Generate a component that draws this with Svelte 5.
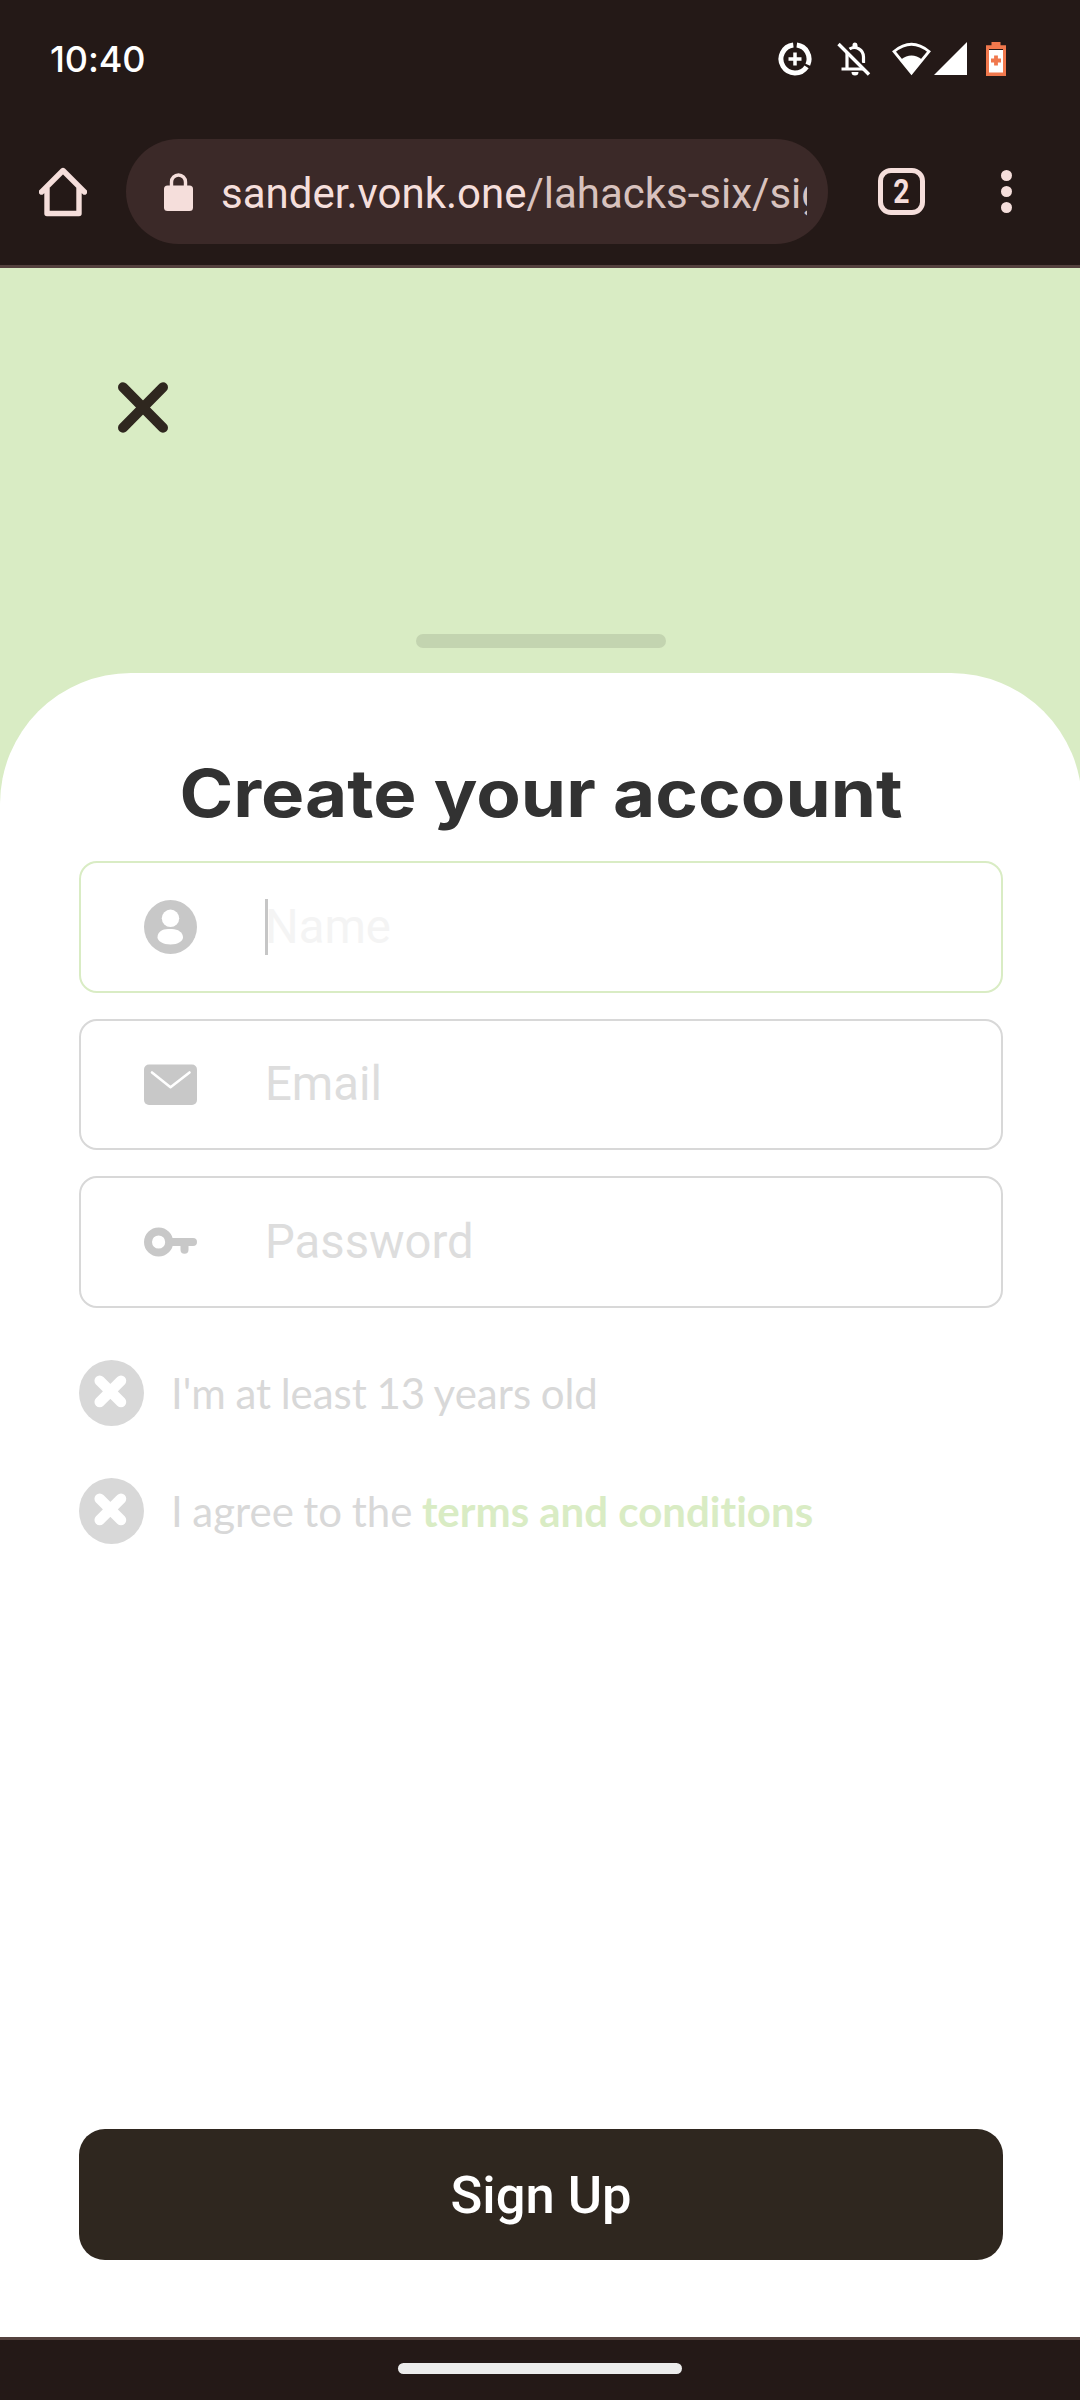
<script>
  const checks = [
    { text: "I'm at least 13 years old", link: '' },
    { text: 'I agree to the ', link: 'terms and conditions' }
  ];
</script>

<div class="screen">
  <header>
    <div class="status">
      <span class="time">10:40</span>
      <div class="sys">
        <svg class="saver" width="34" height="34" viewBox="0 0 34 34">
          <path d="M15.3 3.1A14 14 0 1 0 28.6 24.8M18.8 3.1A14 14 0 0 1 29.8 22.7" fill="none" stroke="#fff" stroke-width="5" />
          <path d="M17 10.5v13M10.5 17h13" stroke="#fff" stroke-width="3.5" />
        </svg>
        <svg class="bell" width="34" height="34" viewBox="0 0 34 34">
          <path d="M10 11V27M4.500 27H26M12.500 7C19 3 26.500 8 26.500 15v6" fill="none" stroke="#fff" stroke-width="3.200" />
          <path d="M15.500 6V3a2.500 2.500 0 0 1 5 0V6h-5zM14.500 30h7a3.500 3.500 0 0 1-7 0z" fill="#fff" />
          <path d="M4 1.500L33 31" stroke="#241917" stroke-width="3.500" />
          <path d="M1.500 2L32 32.500" stroke="#fff" stroke-width="3.400" />
        </svg>
        <svg class="wifi" width="39" height="34" viewBox="0 0 39 34">
          <path d="M2 9.500Q19.500-5 37 9.500L19.500 31z" fill="none" stroke="#fff" stroke-width="2.800" />
          <path d="M9 17.500Q19.500 9.500 30 17.500L19.500 31z" fill="#fff" />
        </svg>
        <svg class="signal" width="33" height="34" viewBox="0 0 33 34"><path d="M33 0V33H0z" fill="#fff" /></svg>
        <svg width="20" height="34" viewBox="0 0 20 34">
          <path d="M5.500 0h9v3.300H20V34H0V3.300h5.500z" fill="#f0784d" />
          <path d="M3 7h14v1H3z" fill="#241917" />
          <path d="M3 8h14v22.500H3z" fill="#fff" />
          <path d="M10 13.500v10M5 18.500h10" stroke="#f0784d" stroke-width="3.800" />
        </svg>
      </div>
    </div>
    <div class="toolbar">
      <svg class="home" width="48" height="50" viewBox="0 0 48 50">
        <path d="M2.500 25L24 3.500 45.500 25M8 21V46.500H40V21" fill="none" stroke="#f5dedb" stroke-width="5.400" stroke-linejoin="round" stroke-linecap="round" />
      </svg>
      <div class="pill">
        <svg width="29" height="38" viewBox="0 0 29 38">
          <rect y="12.500" width="29" height="25.500" rx="3.500" fill="#f5dedb" />
          <path d="M7.500 14V9a7 7 0 0 1 14 0v5" fill="none" stroke="#f5dedb" stroke-width="3.400" />
        </svg>
        <div class="url">sander.vonk.one<span>/lahacks-six/signup</span></div>
      </div>
      <div class="tabs"><span>2</span></div>
      <div class="dots"><i></i><i></i><i></i></div>
    </div>
  </header>

  <main>
    <div class="hero">
      <svg class="close" width="50" height="51" viewBox="0 0 50 51">
        <path d="M5 5.200L45 45.800M45 5.200L5 45.800" stroke="#2f271f" stroke-width="10" stroke-linecap="round" />
      </svg>
      <div class="handle"></div>
    </div>
    <section>
      <h1>Create your account</h1>
      <div class="fields">
        <div class="field active">
          <svg width="53" height="54" viewBox="0 0 53 54">
            <ellipse cx="26.500" cy="27" rx="26.500" ry="27" fill="#c8c8c8" />
            <circle cx="26.500" cy="18.300" r="8.700" fill="#fff" />
            <path d="M13.500 37.500C13.500 32 18 29 24 29h4c6 0 11 3.500 11 8.500 0 3.500-5 7-12.500 7s-13-3.500-13-7z" fill="#fff" />
          </svg>
          <b class="caret"></b>
          <span class="name">Name</span>
        </div>
        <div class="field">
          <svg width="53" height="54" viewBox="0 0 53 54">
            <rect y="6.500" width="53" height="40.500" rx="5" fill="#c8c8c8" />
            <path d="M8 14.500L26.500 29.200 45.500 14.500" fill="none" stroke="#fff" stroke-width="2.600" stroke-linecap="round" stroke-linejoin="round" />
          </svg>
          <span>Email</span>
        </div>
        <div class="field">
          <svg width="53" height="54" viewBox="0 0 53 54">
            <circle cx="14.600" cy="27" r="10.600" fill="none" stroke="#c8c8c8" stroke-width="8" />
            <path d="M28 27H49M40.500 28V34.700" stroke="#c8c8c8" stroke-width="8" stroke-linecap="round" />
          </svg>
          <span>Password</span>
        </div>
      </div>
      <div class="checks">
        {#each checks as c}
          <div class="check">
            <svg width="65" height="66" viewBox="0 0 65 66">
              <ellipse cx="32.500" cy="33" rx="32.500" ry="33" fill="#d8d8d8" />
              <path d="M20.700 20.700L42 42M42 20.700L20.700 42" stroke="#fff" stroke-width="10.500" stroke-linecap="round" />
            </svg>
            <p>{c.text}<strong>{c.link}</strong></p>
          </div>
        {/each}
      </div>
      <button>Sign Up</button>
    </section>
  </main>
  <footer><div></div></footer>
</div>

<style>
  :global(body) { margin: 0; }
  .screen { width: 1080px; height: 2400px; display: flex; flex-direction: column; overflow: hidden; background: #fff; font-family: Roboto, sans-serif; }
  svg { display: block; flex: none; }
  header { box-sizing: border-box; height: 268px; flex: none; background: #241917; border-bottom: 3px solid #54413e; }
  .status { height: 118px; display: flex; align-items: center; justify-content: space-between; padding: 0 74px 0 50px; }
  .time { font: 500 36px/44px Inter, sans-serif; letter-spacing: -0.1px; color: #fff; }
  .sys { display: flex; align-items: center; }
  .saver { margin-right: 25px; }
  .bell { margin-right: 21px; }
  .wifi { margin-right: 3px; }
  .signal { margin-right: 19px; }
  .toolbar { height: 147px; display: flex; align-items: center; box-sizing: border-box; padding: 0 68px 0 39px; }
  .toolbar > * { flex: none; }
  .pill { margin-left: 39px; width: 702px; height: 105px; border-radius: 53px; background: #3b2928; box-sizing: border-box; padding: 0 21px 0 38px; display: flex; align-items: center; }
  .url { margin-left: 28px; padding-top: 4px; flex: 1; overflow: hidden; white-space: nowrap; font-size: 42px; line-height: 56px; color: #f5dedb; }
  .url span { color: #d8c2be; }
  .tabs { box-sizing: border-box; margin-left: 50px; width: 47px; height: 47px; border: 5px solid #f5dedb; border-radius: 13px; font-weight: 700; font-size: 33px; line-height: 37px; text-align: center; color: #f5dedb; }
  .tabs span { display: block; transform: scaleX(0.86); }
  .dots { margin-left: 76px; display: grid; gap: 5px; }
  .dots i { width: 11px; height: 11px; border-radius: 50%; background: #f5dedb; }
  main { width: 1082px; flex: 1; display: flex; flex-direction: column; background: linear-gradient(#d9ecc4 0 600px, #fff 600px); }
  .hero { height: 405px; box-sizing: border-box; flex: none; display: flex; flex-direction: column; justify-content: space-between; padding: 114px 0 25px; }
  .close { margin-left: 118px; }
  .handle { align-self: center; width: 250px; height: 14px; border-radius: 7px; background: #c3d4b0; }
  section { flex: 1; box-sizing: border-box; display: flex; flex-direction: column; padding: 80px 79px 77px; background: #fff; border-radius: 131px 131px 0 0; }
  h1 { margin: 0; height: 108px; font: 700 66px/80px Inter, sans-serif; transform: scaleX(1.102); color: #323232; text-align: center; white-space: nowrap; }
  .fields { display: grid; gap: 26px; }
  .field { box-sizing: border-box; height: 131.5px; border: 2px solid #d8d8d8; border-radius: 18px; display: flex; align-items: center; padding-left: 63px; font-size: 47.25px; color: #ddd; }
  .field svg { margin-top: 1px; }
  .field span { margin-left: 68px; }
  .active { border-color: #d9ecc4; }
  .caret { width: 3px; height: 56px; margin-left: 68px; background: #c6c6c6; }
  .field .name { margin-left: -3px; color: #f4f4f4; }
  .checks { display: grid; gap: 52px; margin-top: 52px; }
  .check { display: flex; align-items: center; height: 66px; }
  p { margin: 0 0 0 27px; font: 400 42px/52px Lato, sans-serif; font-variant-ligatures: none; word-spacing: -1.2px; color: #d8d8d8; white-space: pre; }
  strong { color: #d9ecc4; word-spacing: 0; }
  button { margin-top: auto; height: 131px; border: 0; border-radius: 26px; background: #2f271f; color: #fff; font: 500 52.5px/62px Roboto, sans-serif; }
  footer { box-sizing: border-box; height: 63px; flex: none; background: #241917; border-top: 3px solid #54413e; padding-top: 23px; }
  footer div { width: 284px; height: 11px; margin: 0 auto; border-radius: 6px; background: #ececec; }
</style>
